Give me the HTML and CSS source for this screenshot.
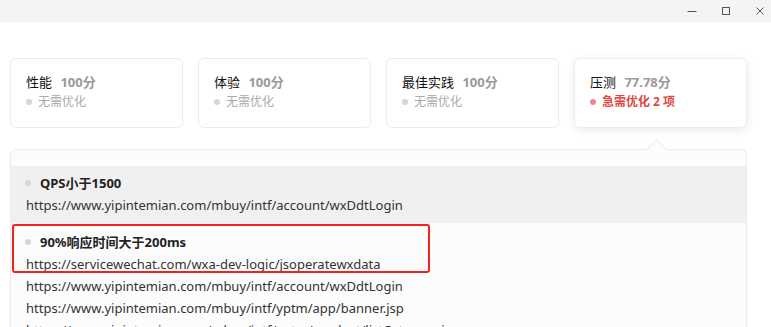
FILE: index.html
```html
<!DOCTYPE html>
<html lang="zh-CN">
<head>
  <meta charset="UTF-8" />
  <title>体验评分</title>
  <link rel="stylesheet" href="styles.css">
</head>
<body>
  <!-- Window title bar -->
  <header class="titlebar">
    <span class="win-btn">
      <svg width="10" height="10" viewBox="0 0 10 10"><path d="M0.5 5.5h9" stroke="#555" stroke-width="1"/></svg>
    </span>
    <span class="win-btn">
      <svg width="10" height="10" viewBox="0 0 10 10"><rect x="1.5" y="1.5" width="7" height="7" fill="none" stroke="#555" stroke-width="1"/></svg>
    </span>
    <span class="win-btn">
      <svg width="10" height="10" viewBox="0 0 10 10"><path d="M1.5 1.5l7 7M8.5 1.5l-7 7" stroke="#555" stroke-width="1"/></svg>
    </span>
  </header>

  <main class="page">
    <!-- Score cards -->
    <section class="cards">
      <div class="card">
        <div class="card-title">性能 <span class="score">100分</span></div>
        <div class="card-status"><i class="dot"></i>无需优化</div>
      </div>
      <div class="card">
        <div class="card-title">体验 <span class="score">100分</span></div>
        <div class="card-status"><i class="dot"></i>无需优化</div>
      </div>
      <div class="card">
        <div class="card-title">最佳实践 <span class="score">100分</span></div>
        <div class="card-status"><i class="dot"></i>无需优化</div>
      </div>
      <div class="card active">
        <div class="card-title">压测 <span class="score">77.78分</span></div>
        <div class="card-status warn"><i class="dot"></i>急需优化 2 项</div>
      </div>
    </section>

    <!-- Detail panel -->
    <section class="panel">
      <span class="arrow"></span>
      <div class="item shaded">
        <div class="item-title"><i class="dot"></i>QPS小于1500</div>
        <div class="url">https://www.yipintemian.com/mbuy/intf/account/wxDdtLogin</div>
      </div>
      <div class="item">
        <span class="mark"></span>
        <div class="item-title"><i class="dot"></i>90%响应时间大于200ms</div>
        <div class="url">https://servicewechat.com/wxa-dev-logic/jsoperatewxdata</div>
        <div class="url">https://www.yipintemian.com/mbuy/intf/account/wxDdtLogin</div>
        <div class="url">https://www.yipintemian.com/mbuy/intf/yptm/app/banner.jsp</div>
        <div class="url">https://www.yipintemian.com/mbuy/intf/yptm/product/listCategory.jsp</div>
      </div>
    </section>
  </main>
</body>
</html>
```

FILE: styles.css
```css
/* Base */
html, body {
  margin: 0;
  height: 100%;
  overflow: hidden;
}

body {
  background: #ffffff;
  font-family: "Noto Sans", "Noto Sans CJK SC", sans-serif;
  color: #222;
}

/* Title bar */
.titlebar {
  height: 22px;
  background: #f4f4f4;
  display: flex;
  justify-content: flex-end;
  align-items: center;
  padding-right: 6px;
  gap: 24px;
}

.win-btn {
  display: flex;
  width: 10px;
  height: 10px;
}

/* Page */
.page {
  padding: 36px 24px 0 10px;
}

/* Score cards */
.cards {
  display: grid;
  grid-template-columns: repeat(4, 173px);
  gap: 15px;
}

.card {
  box-sizing: border-box;
  height: 70px;
  padding: 13px 15px;
  border: 1px solid #ececec;
  border-radius: 6px;
  background: #fff;
}

.card.active {
  border-color: #ededed;
  box-shadow: 0 2px 8px rgba(0, 0, 0, 0.09);
}

.card-title {
  font-size: 13px;
  line-height: 20px;
  font-weight: 400;
  color: #111;
  white-space: nowrap;
}

.score {
  margin-left: 5px;
  font-weight: 700;
  color: #9a9a9a;
}

.card-status {
  display: flex;
  align-items: center;
  font-size: 12px;
  line-height: 20px;
  color: #aaa;
}

.card-status.warn {
  color: #e04a43;
  font-weight: 700;
}

.dot {
  display: inline-block;
  width: 6px;
  height: 6px;
  border-radius: 50%;
  background: #d6d6d6;
  margin-right: 7px;
  flex: none;
}

.card-status .dot {
  margin-left: 0;
  margin-right: 6px;
}

.card-status.warn .dot {
  background: #e98a86;
}

/* Detail panel */
.panel {
  position: relative;
  margin-top: 21px;
  width: 737px;
  box-sizing: border-box;
  padding-top: 16px;
  border: 1px solid #ebebeb;
  border-bottom: none;
  border-radius: 6px 6px 0 0;
  background: #fcfcfc;
}

.arrow {
  position: absolute;
  top: -8px;
  left: 638px;
  width: 14px;
  height: 14px;
  background: #fcfcfc;
  border-top: 1px solid #ebebeb;
  border-left: 1px solid #ebebeb;
  transform: rotate(45deg);
}

.item {
  position: relative;
  padding: 8px 15px 0;
}

.item.shaded {
  background: #f0f0f0;
  padding: 6px 15px 7px;
}

.item-title {
  display: flex;
  align-items: center;
  font-size: 13px;
  line-height: 22px;
  font-weight: 700;
  color: #222;
}

.item-title .dot {
  margin-left: -1px;
  margin-right: 9px;
}

.url {
  font-size: 13px;
  line-height: 22px;
  color: #333;
  white-space: nowrap;
}

/* Red annotation box */
.mark {
  position: absolute;
  top: 1px;
  left: 1px;
  width: 414px;
  height: 45px;
  border: 2px solid #f5221b;
  border-radius: 3px;
}
```
